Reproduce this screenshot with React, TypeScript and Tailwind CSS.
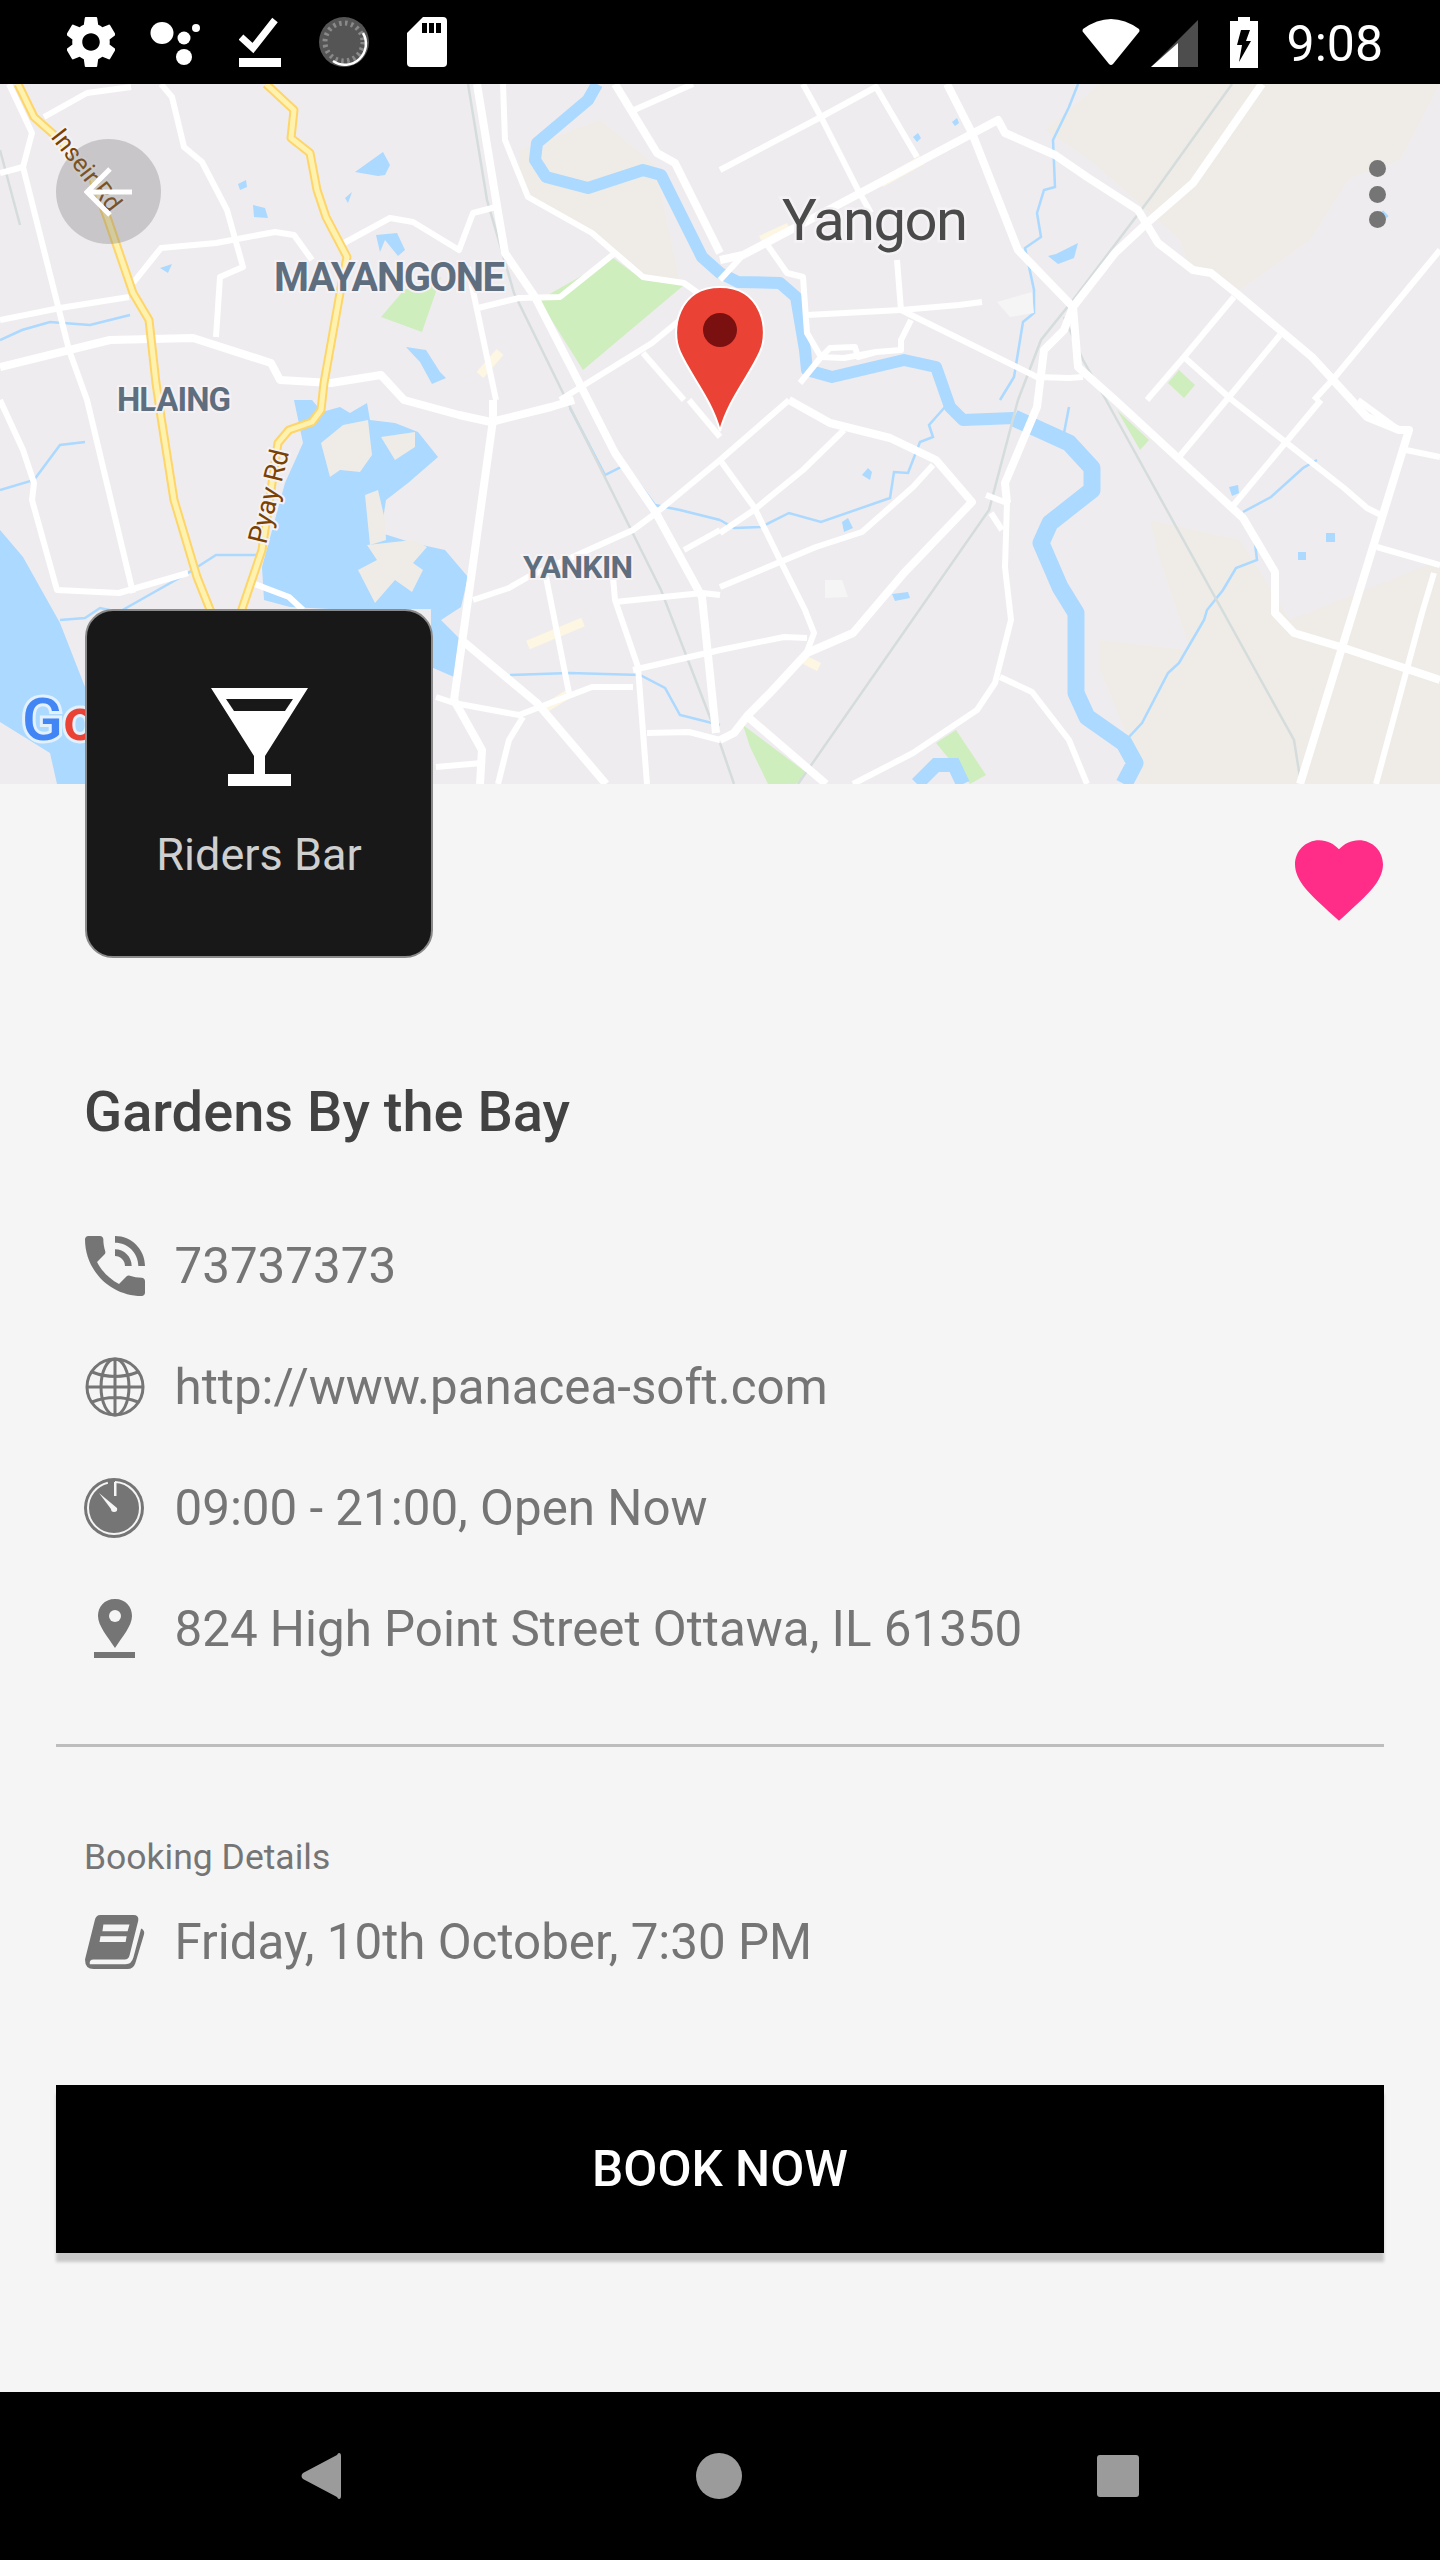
const water = [
  "0,530 23,557 60,623 85,687 90,784 57,784 50,753 0,722",
  "303,443 294,400 312,400 322,412 340,407 350,413 367,403 370,420 395,423 418,432 438,457 408,483 386,500 381,533 413,543 445,550 468,577 461,607 441,620 459,638 454,677 431,667 431,609 330,609 290,607 264,600 262,567 285,483",
  "355,172 383,152 390,165 385,175 378,176",
  "253,205 265,208 268,218 254,217",
  "238,184 246,180 247,187 240,190",
  "345,198 352,192 348,203",
  "160,268 172,264 168,273",
  "376,235 397,233 405,250 398,256 385,240 380,252",
  "406,347 426,350 440,372 446,378 432,384 420,362",
  "862,475 868,468 872,472 870,480",
  "842,522 848,518 853,528 844,532",
  "892,594 908,592 910,598 895,601",
  "1229,487 1238,485 1239,493 1232,496",
  "913,137 918,133 921,138 917,142",
  "952,122 957,118 959,123 955,126",
  "1048,256 1056,254 1070,247 1078,243 1074,258 1058,264",
];

const islands = [
  "321,443 343,425 368,420 372,455 360,472 340,470 330,477",
  "381,437 415,432 415,447 395,460",
  "365,495 378,490 385,520 386,540 370,545",
  "367,545 413,540 427,547 413,563 423,570 412,592 395,580 375,603 358,570 377,560",
];

const beige = [
  "1045,130 1090,160 1180,240 1190,270 1240,290 1310,240 1380,130 1290,84 1100,84",
  "1160,160 1270,240 1290,200 1400,160 1440,84 1270,84",
  "1128,738 1100,670 1100,640 1190,650 1160,560 1150,520 1240,540 1290,620 1440,560 1440,784 1140,784",
  "520,190 590,230 650,280 680,283 655,165 600,120 520,150",
  "0,610 23,677 24,677 0,677",
];

const parks = [
  "539,300 613,258 643,280 684,285 583,370",
  "381,317 404,290 441,277 422,332",
  "1179,370 1195,385 1184,398 1168,383",
  "1117,410 1149,440 1140,450",
  "743,725 807,773 796,784 768,784 750,747",
  "956,730 986,775 970,784 936,743",
];

const riverNorth =
  "597,84 588,100 537,143 535,160 546,177 588,188 643,170 661,175 702,257 720,273 738,282 780,283 796,297 805,350 807,370 832,377 904,360 936,367 950,407 963,420 1014,418";
const riverSouth =
  "1014,418 1069,443 1092,468 1092,490 1050,523 1041,543 1060,587 1076,613 1076,693 1087,717 1124,743 1135,763 1124,784";

const thinRivers = [
  "720,520 734,528 761,527 789,513 821,522 890,498 894,472 908,473 920,442 933,437 929,425 945,407",
  "1064,433 1069,407",
  "1000,400 1014,377 1023,322 1034,313 1034,290 1025,248 1041,237 1037,213 1044,190 1055,187 1053,140 1069,107 1078,84",
  "1243,512 1271,497 1303,468 1317,460",
  "1255,543 1257,560 1236,568 1223,590 1207,610 1204,620 1179,663 1168,673 1142,723 1128,738",
  "0,490 34,480 60,445 85,442",
  "0,340 22,330 50,322 90,325 130,315",
  "60,620 85,618 100,608 119,612 188,573 216,555 260,555",
  "570,408 605,475 625,465 655,505 680,510 720,520",
  "510,675 570,673 640,675 665,688 680,715 720,725",
];

const rails = [
  "468,84 487,200 514,293 565,397 661,590 716,733",
  "1232,84 1151,197 1073,300 1041,340 1018,400 989,510 798,784",
  "1064,317 1083,360 1106,400 1294,740 1301,784",
  "720,743 734,784",
  "0,150 20,225",
];

const creamRoads = [
  "528,645 583,622",
  "542,710 570,693",
  "480,375 500,352",
  "881,183 922,160",
  "761,240 789,227",
  "805,660 819,667",
];

const mainRoads = [
  "720,260 743,255 766,243 998,120 1005,133 1055,155 1087,177 1138,210 1158,243 1193,270 1211,273 1236,293 1312,357 1367,417 1399,430 1409,430 1300,784",
  "947,84 972,133 1018,250 1073,307 1078,367 1115,400 1243,518 1275,572 1275,613 1294,633 1344,648 1440,680",
  "1262,84 1193,183 1147,223 1115,253 1073,307 1064,330 1044,350 1037,407 1005,483 1007,503",
  "789,400 830,423 890,438 936,460 972,502 904,573 853,633 807,653 770,693 748,715 734,733 720,740",
  "748,717 826,784",
  "615,84 657,153 675,163 720,253",
  "477,84 496,200 505,253 535,297 588,400 615,453 656,513 702,597 716,733",
  "0,367 110,340 193,338 271,363 280,380 331,383 381,375 404,400 459,415 491,422 551,407 574,400",
  "493,400 493,420 468,600 454,700 482,750 480,784",
  "464,642 537,703 606,784",
];

const sideRoads = [
  "9,84 32,133 23,167 69,350 87,400 133,593",
  "0,173 23,167",
  "44,117 87,93 131,87",
  "161,84 172,97 184,147 202,162 227,210 243,267 220,277 216,337",
  "133,283 161,248 216,243 275,232 294,235 312,260",
  "0,320 60,308 129,297",
  "344,243 390,218 413,222 459,250 473,213 496,207",
  "503,84 505,140 528,197 592,233 643,277 684,283 698,293",
  "468,267 496,400",
  "478,308 519,298 560,297 615,253",
  "634,110 693,84",
  "560,400 652,343 680,320",
  "643,353 684,400",
  "803,84 821,117 858,190 871,213",
  "720,170 821,117 876,87 917,157",
  "720,280 743,255",
  "766,243 787,273 803,277 807,333 821,357 800,383",
  "897,260 901,310",
  "807,315 901,310 959,305 982,302",
  "901,310 1037,377 1069,378 1083,377",
  "911,320 901,340 901,350 876,352 858,357 855,347 830,348 821,357 844,358 876,352",
  "1440,250 1335,377 1314,400",
  "1234,297 1184,357 1147,400",
  "1280,335 1229,397 1179,457",
  "1184,357 1232,400 1344,488 1367,508 1381,515",
  "0,400 23,450 34,483 32,500 57,590 119,593 188,573",
  "252,583 289,597 303,610",
  "473,600 509,588 528,577 633,530 656,513 720,460 789,400",
  "546,577 569,693",
  "613,577 615,600 638,667 647,784",
  "615,602 702,593 720,595",
  "633,670 720,650 784,637 807,638",
  "436,697 454,703 519,715 592,687 633,687",
  "523,717 509,740 498,784",
  "647,733 689,732 720,740",
  "684,550 720,530",
  "436,767 482,763",
  "689,400 720,437",
  "720,460 754,507 780,560 805,610 814,633 805,657",
  "720,533 754,510 803,470 844,430",
  "720,587 816,547 862,532 913,487 933,465",
  "986,495 1007,503 1005,567 1011,620 995,683 977,710 913,753 853,784",
  "1000,677 1032,692 1069,740 1087,784",
  "991,513 1002,530",
  "1232,507 1321,400",
  "1358,400 1399,430",
  "1406,450 1440,457",
  "1377,547 1440,565",
  "1434,573 1422,613 1376,784",
];

const highways = [
  "18,84 34,117 60,140 92,177 108,220 133,293 149,320 156,383 161,417 174,500 197,577 211,612",
  "266,84 294,110 291,138 310,153 317,190 326,217 347,257 340,293 324,383 321,410 312,422 289,430 278,443 262,550 241,612",
];

function MapDrawing() {
  return (
    <svg viewBox="0 84 1440 700" className="block w-full h-full">
      <rect x="0" y="84" width="1440" height="700" fill="#efecef" />
      {beige.map((p) => (
        <polygon key={p} points={p} fill="#efece8" />
      ))}
      {parks.map((p) => (
        <polygon key={p} points={p} fill="#cfeebd" />
      ))}
      {water.map((p) => (
        <polygon key={p} points={p} fill="#abd9ff" />
      ))}
      {islands.map((p) => (
        <polygon key={p} points={p} fill="#efece8" />
      ))}
      <polyline points={riverNorth} fill="none" stroke="#abd9ff" strokeWidth="12" strokeLinejoin="round" />
      <polyline points={riverSouth} fill="none" stroke="#abd9ff" strokeWidth="17" strokeLinejoin="round" />
      <polyline points="917,784 936,765 954,765 963,784" fill="none" stroke="#abd9ff" strokeWidth="14" />
      {thinRivers.map((p) => (
        <polyline key={p} points={p} fill="none" stroke="#abd9ff" strokeWidth="2.5" />
      ))}
      <rect x="1326" y="533" width="9" height="9" fill="#abd9ff" />
      <rect x="1298" y="552" width="8" height="8" fill="#abd9ff" />
      <rect x="1379" y="212" width="8" height="8" fill="#abd9ff" transform="rotate(45 1383 216)" />
      <polygon points="825,580 842,580 848,597 825,598" fill="#f5f5f5" />
      <polygon points="997,302 1032,292 1034,313 1010,317" fill="#f5f5f5" />
      {rails.map((p) => (
        <polyline key={p} points={p} fill="none" stroke="#d5dcdc" strokeWidth="2.5" />
      ))}
      {creamRoads.map((p) => (
        <polyline key={p} points={p} fill="none" stroke="#fdf6e3" strokeWidth="9" />
      ))}
      {sideRoads.map((p) => (
        <polyline key={p} points={p} fill="none" stroke="#fff" strokeWidth="6" strokeLinejoin="round" />
      ))}
      {mainRoads.map((p) => (
        <polyline key={p} points={p} fill="none" stroke="#fff" strokeWidth="8" strokeLinejoin="round" />
      ))}
      {highways.map((p) => (
        <g key={p}>
          <polyline points={p} fill="none" stroke="#fdd56a" strokeWidth="9" strokeLinejoin="round" />
          <polyline points={p} fill="none" stroke="#fff2af" strokeWidth="5" strokeLinejoin="round" />
        </g>
      ))}
      <path d="M720 431 C712 400 690 375 680 352 C670 330 678 287 720 287 C762 287 770 330 760 352 C750 375 728 400 720 431 Z" fill="#ea4335" stroke="#fff" strokeWidth="2" />
      <circle cx="720" cy="330" r="17" fill="#7b1010" />
      <g className="font-[Roboto,sans-serif]">
        <text x="274" y="291" fontSize="40" fontWeight="700" fill="#5f6e7e" stroke="#f4f2f4" strokeWidth="4" paintOrder="stroke" textLength="231">MAYANGONE</text>
        <text x="117" y="411" fontSize="33" fontWeight="700" fill="#5f6e7e" stroke="#f4f2f4" strokeWidth="4" paintOrder="stroke" textLength="114">HLAING</text>
        <text x="523" y="578" fontSize="32" fontWeight="700" fill="#5f6e7e" stroke="#f4f2f4" strokeWidth="4" paintOrder="stroke" textLength="110">YANKIN</text>
        <text x="782" y="240" fontSize="58" fill="#4a4a4a" stroke="#f4f2f4" strokeWidth="5" paintOrder="stroke" textLength="186">Yangon</text>
        <text x="50" y="137" fontSize="25" fill="#7a4100" stroke="#f4f2f4" strokeWidth="4" paintOrder="stroke" transform="rotate(52 50 137)">Inseir Rd</text>
        <text x="266" y="545" fontSize="27" fill="#7a4100" stroke="#f4f2f4" strokeWidth="4" paintOrder="stroke" transform="rotate(-76 266 545)">Pyay Rd</text>
        <text x="22" y="740" fontSize="60" fontWeight="500" stroke="#e3f1fd" strokeWidth="6" paintOrder="stroke">
          <tspan fill="#4285f4">G</tspan>
          <tspan fill="#ea4335">o</tspan>
        </text>
      </g>
    </svg>
  );
}

function StatusBar() {
  return (
    <header className="h-[84px] bg-black flex items-center justify-between pl-[67px] pr-[57px]">
      <div className="flex items-center">
        <svg viewBox="2.5 2 19 20" className="w-[48px] h-[50px] fill-white">
          <path d="M19.43 12.98c.04-.32.07-.64.07-.98s-.03-.66-.07-.98l2.11-1.65c.19-.15.24-.42.12-.64l-2-3.46c-.12-.22-.39-.3-.61-.22l-2.49 1c-.52-.4-1.08-.73-1.69-.98l-.38-2.65C14.46 2.18 14.25 2 14 2h-4c-.25 0-.46.18-.49.42l-.38 2.65c-.61.25-1.17.59-1.69.98l-2.49-1c-.23-.09-.49 0-.61.22l-2 3.46c-.13.22-.07.49.12.64l2.11 1.65c-.04.32-.07.65-.07.98s.03.66.07.98l-2.11 1.65c-.19.15-.24.42-.12.64l2 3.46c.12.22.39.3.61.22l2.49-1c.52.4 1.08.73 1.69.98l.38 2.65c.03.24.24.42.49.42h4c.25 0 .46-.18.49-.42l.38-2.65c.61-.25 1.17-.59 1.69-.98l2.49 1c.23.09.49 0 .61-.22l2-3.46c.12-.22.07-.49-.12-.64l-2.11-1.65zM12 15.5c-1.93 0-3.5-1.57-3.5-3.5s1.57-3.5 3.5-3.5 3.5 1.57 3.5 3.5-1.57 3.5-3.5 3.5z" />
        </svg>
        <svg viewBox="0 0 52 50" className="w-[52px] h-[50px] ml-[35px] fill-white">
          <ellipse cx="12" cy="16" rx="11.5" ry="11" />
          <circle cx="34" cy="21" r="6.5" />
          <circle cx="46" cy="11" r="4" />
          <circle cx="34" cy="40" r="8" />
        </svg>
        <svg viewBox="0 0 42 50" className="w-[42px] h-[50px] ml-[37px]">
          <path d="M2 20 L14 31 L36 3" fill="none" stroke="#fff" strokeWidth="7" />
          <rect x="0" y="41" width="42" height="9" fill="#fff" />
        </svg>
        <svg viewBox="0 0 50 50" className="w-[50px] h-[50px] ml-[38px]">
          <circle cx="25" cy="25" r="25" fill="#555" />
          <circle cx="25" cy="25" r="19" fill="none" stroke="#8a8a8a" strokeWidth="5" strokeDasharray="2.5 3.5" />
          <path d="M44 16 A21 21 0 0 1 14 44" fill="none" stroke="#fff" strokeWidth="2.5" />
        </svg>
        <svg viewBox="0 0 40 50" className="w-[40px] h-[50px] ml-[38px]">
          <path d="M16 0 H36 Q40 0 40 4 V46 Q40 50 36 50 H4 Q0 50 0 46 V16 Z" fill="#fff" />
          <rect x="15" y="6" width="5" height="10" />
          <rect x="22" y="6" width="5" height="10" />
          <rect x="29" y="6" width="5" height="10" />
        </svg>
      </div>
      <div className="flex items-center">
        <svg viewBox="0 0 58 48" className="w-[58px] h-[48px] fill-white -mt-[2px]">
          <path d="M1 12 Q29 -8 57 12 Q58 14 57 15 L31 47 Q29 49 27 47 L1 15 Q0 14 1 12 Z" />
        </svg>
        <svg viewBox="0 0 47 47" className="w-[47px] h-[47px] ml-[11px] mt-[3px]">
          <path d="M47 0 V47 H0 Z" fill="#4d4d4d" />
          <path d="M27 23 V47 H0 Z" fill="#fff" />
        </svg>
        <svg viewBox="0 0 28 51" className="w-[28px] h-[51px] ml-[32px]">
          <path d="M8 0 H20 V4 H28 V51 H0 V4 H8 Z" fill="#fff" />
          <path d="M11 13 H20 L16 24 H21 L9 45 L12 28 H7 Z" fill="#000" />
        </svg>
        <span className="ml-[29px] mt-[4px] text-white text-[50px] leading-none">9:08</span>
      </div>
    </header>
  );
}

function InfoRow({ icon, text }: { icon: React.ReactNode; text: string }) {
  return (
    <div className="flex items-center h-[60px]">
      <div className="w-[60px] flex justify-center items-center -mt-[3px]">{icon}</div>
      <span className="ml-[29.5px] text-[49.3px] leading-none text-[#757575]">{text}</span>
    </div>
  );
}

export default function App() {
  return (
    <div className="w-[1440px] h-[2560px] flex flex-col bg-[#f5f5f5] font-[Roboto,sans-serif]">
      <StatusBar />
      <section className="relative h-[700px]">
        <MapDrawing />
        <button className="absolute left-[56px] top-[55px] w-[105px] h-[105px] rounded-full bg-[rgba(120,120,120,0.33)] flex items-center justify-center">
          <svg viewBox="0 0 50 50" className="w-[50px] h-[50px]">
            <path d="M48 25 H3 M26 2 L3 25 L26 48" fill="none" stroke="#fff" strokeWidth="5" />
          </svg>
        </button>
        <div className="absolute right-[54px] top-[76px] flex flex-col gap-[8.5px]">
          <div className="w-[17px] h-[17px] rounded-full bg-[#757575]" />
          <div className="w-[17px] h-[17px] rounded-full bg-[#757575]" />
          <div className="w-[17px] h-[17px] rounded-full bg-[#757575]" />
        </div>
      </section>
      <main className="relative flex-1 flex flex-col">
        <div className="absolute left-[85px] -top-[175px] w-[348px] h-[349px] rounded-[28px] bg-[#181818] border-2 border-[#8a8a8a] flex flex-col items-center">
          <svg viewBox="0 0 97 98" className="w-[97px] h-[98px] mt-[77px]">
            <path d="M0 0 H97 L54 68 V86 H80 V98 H17 V86 H43 V68 Z" fill="#fff" />
            <path d="M15 11 H82 L74 23 H23 Z" fill="#181818" />
          </svg>
          <span className="mt-[46px] text-[45px] leading-none text-[#cfcfcf]">Riders Bar</span>
        </div>
        <div className="flex justify-end pr-[57px] pt-[56px]">
          <svg viewBox="2 3 20 18.35" className="w-[88px] h-[81px] fill-[#ff2d87]">
            <path d="M12 21.35l-1.45-1.32C5.4 15.36 2 12.28 2 8.5 2 5.42 4.42 3 7.5 3c1.74 0 3.41.81 4.5 2.09C13.09 3.81 14.76 3 16.5 3 19.58 3 22 5.42 22 8.5c0 3.78-3.4 6.86-8.55 11.54L12 21.35z" />
          </svg>
        </div>
        <h1 className="ml-[84px] mt-[161px] text-[56px] leading-[60px] font-medium text-[#424242]">Gardens By the Bay</h1>
        <div className="ml-[85px] mt-[95px] flex flex-col gap-[61px]">
          <InfoRow
            text="73737373"
            icon={
              <svg viewBox="3 3 18 18" className="w-[60px] h-[60px] fill-[#757575]">
                <path d="M20 15.5c-1.25 0-2.45-.2-3.57-.57-.35-.11-.74-.03-1.02.24l-2.2 2.2c-2.83-1.44-5.15-3.75-6.59-6.59l2.2-2.21c.28-.26.36-.65.25-1C8.7 6.45 8.5 5.25 8.5 4c0-.55-.45-1-1-1H4c-.55 0-1 .45-1 1 0 9.39 7.61 17 17 17 .55 0 1-.45 1-1v-3.5c0-.55-.45-1-1-1zM19 12h2c0-4.97-4.03-9-9-9v2c3.87 0 7 3.13 7 7zm-4 0h2c0-2.76-2.24-5-5-5v2c1.66 0 3 1.34 3 3z" />
              </svg>
            }
          />
          <InfoRow
            text="http://www.panacea-soft.com"
            icon={
              <svg viewBox="0 0 60 60" className="w-[60px] h-[60px]" fill="none" stroke="#757575" strokeWidth="3">
                <circle cx="30" cy="30" r="28" />
                <ellipse cx="30" cy="30" rx="14" ry="28" />
                <path d="M30 2 V58 M2 30 H58 M7 15 Q30 24 53 15 M7 45 Q30 36 53 45" />
              </svg>
            }
          />
          <InfoRow
            text="09:00 - 21:00, Open Now"
            icon={
              <svg viewBox="0 0 60 60" className="w-[60px] h-[60px] -ml-[2px]">
                <circle cx="30" cy="30" r="30" fill="#757575" />
                <circle cx="30" cy="30" r="26" fill="none" stroke="#f5f5f5" strokeWidth="2" strokeDasharray="155 8" strokeDashoffset="-1" transform="rotate(-90 30 30)" />
                <rect x="30" y="4" width="2.5" height="14" fill="#f5f5f5" />
                <path d="M15 15 L33 30 Q34 34 30 34 Q27 34 27 31 Z" fill="#f5f5f5" />
              </svg>
            }
          />
          <InfoRow
            text="824 High Point Street Ottawa, IL 61350"
            icon={
              <svg viewBox="0 0 42 60" className="w-[42px] h-[60px]">
                <path d="M21 0 C10 0 4 8 4 17 C4 27 14 38 21 49 C28 38 38 27 38 17 C38 8 32 0 21 0 Z" fill="#757575" />
                <circle cx="21" cy="17" r="6" fill="#f5f5f5" />
                <rect x="0" y="53" width="41" height="6" fill="#757575" />
              </svg>
            }
          />
        </div>
        <div className="mx-[56px] mt-[84px] h-[3px] bg-[#bdbdbd]" />
        <p className="ml-[84px] mt-[90px] text-[35.5px] leading-[40px] text-[#757575]">Booking Details</p>
        <div className="ml-[85px] mt-[36px]">
          <InfoRow
            text="Friday, 10th October, 7:30 PM"
            icon={
              <svg viewBox="0 0 62 56" className="w-[62px] h-[56px]">
                <path d="M16 0 H50 Q56 0 55 6 L46 42 Q45 46 41 46 H9 Q4 46 5 51 H42 Q48 51 50 44 L58 14 Q62 16 61 20 L52 50 Q50 56 44 56 H9 Q0 56 0 46 L10 6 Q11 0 16 0 Z" fill="#757575" />
                <path d="M19 10 H46 L44 17 H18 Z M16 22 H43 L42 28 H15 Z" fill="#f5f5f5" />
              </svg>
            }
          />
        </div>
        <button className="mx-[56px] mt-[112px] h-[168px] bg-black text-white text-[49.5px] font-medium shadow-[0_9px_3px_rgba(0,0,0,0.18)]">BOOK NOW</button>
      </main>
      <footer className="h-[168px] bg-black flex items-center justify-center gap-[355px]">
        <svg viewBox="0 0 40 46" className="w-[40px] h-[46px] fill-[#9b9b9b]">
          <path d="M38 0 Q40 0 40 3 V43 Q40 46 38 46 Q37 46 36 44 L2 26 Q-1 23 2 20 L36 2 Q37 0 38 0 Z" />
        </svg>
        <div className="w-[46px] h-[46px] rounded-full bg-[#9b9b9b]" />
        <div className="w-[42px] h-[42px] rounded-[3px] bg-[#9b9b9b]" />
      </footer>
    </div>
  );
}
